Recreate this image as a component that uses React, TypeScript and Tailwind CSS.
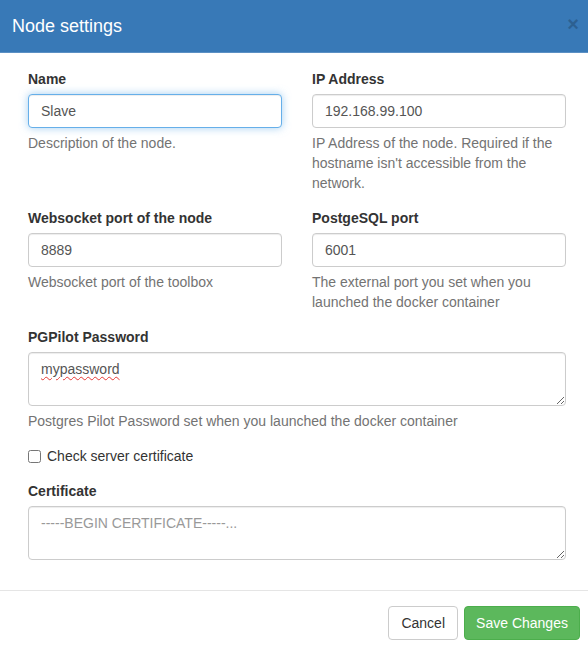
import React from "react";

const Field = ({
  label,
  value,
  help,
  focused,
}: {
  label: string;
  value: string;
  help: string;
  focused?: boolean;
}) => (
  <div className="flex flex-col">
    <label className="text-[14px] leading-[20px] font-bold text-[#333] mb-[5px]">{label}</label>
    <input
      defaultValue={value}
      className={`h-[34px] w-full rounded-[4px] border bg-white px-[12px] text-[14px] text-[#555] outline-none ${
        focused
          ? "border-[#66afe9] shadow-[inset_0_1px_1px_rgba(0,0,0,0.075),0_0_8px_rgba(102,175,233,0.6)]"
          : "border-[#ccc] shadow-[inset_0_1px_1px_rgba(0,0,0,0.075)]"
      }`}
    />
    <p className="mt-[5px] text-[14px] leading-[20px] text-[#737373]">{help}</p>
  </div>
);

export default function App() {
  return (
    <div className="w-[588px] h-[650px] overflow-hidden bg-white font-['Liberation_Sans',Arial,sans-serif]">
      {/* Header */}
      <div className="h-[53px] bg-[#3879b7] border-b border-[#5b90c4] flex items-center justify-between pl-[12px] pr-[9px]">
        <h4 className="text-[18px] leading-[26px] text-white">Node settings</h4>
        <span className="text-[20px] font-bold leading-none text-black opacity-20 -mt-[4px]">×</span>
      </div>

      {/* Body */}
      <div className="pl-[28px] pr-[22px] pt-[16px] pb-[15px]">
        <div className="grid grid-cols-2 gap-x-[30px] gap-y-[15px]">
          <Field label="Name" value="Slave" help="Description of the node." focused />
          <Field
            label="IP Address"
            value="192.168.99.100"
            help="IP Address of the node. Required if the hostname isn't accessible from the network."
          />
          <Field label="Websocket port of the node" value="8889" help="Websocket port of the toolbox" />
          <Field
            label="PostgeSQL port"
            value="6001"
            help="The external port you set when you launched the docker container"
          />
        </div>

        <div className="mt-[15px] flex flex-col">
          <label className="text-[14px] leading-[20px] font-bold text-[#333] mb-[5px]">PGPilot Password</label>
          <div className="h-[54px] resize-y overflow-auto rounded-[4px] border border-[#ccc] px-[12px] py-[6px] text-[14px] leading-[20px] text-[#555] shadow-[inset_0_1px_1px_rgba(0,0,0,0.075)]">
            <span className="underline decoration-wavy decoration-[#e53935] decoration-1 underline-offset-[2px]">
              mypassword
            </span>
          </div>
          <p className="mt-[5px] text-[14px] leading-[20px] text-[#737373]">
            Postgres Pilot Password set when you launched the docker container
          </p>
        </div>

        <label className="mt-[15px] flex items-center gap-[6px] text-[14px] leading-[20px] text-[#333]">
          <input type="checkbox" className="h-[13px] w-[13px] m-0" />
          Check server certificate
        </label>

        <div className="mt-[15px] flex flex-col">
          <label className="text-[14px] leading-[20px] font-bold text-[#333] mb-[5px]">Certificate</label>
          <textarea
            rows={2}
            placeholder="-----BEGIN CERTIFICATE-----..."
            className="h-[54px] rounded-[4px] border border-[#ccc] px-[12px] py-[6px] text-[14px] leading-[20px] text-[#555] placeholder:text-[#999] outline-none shadow-[inset_0_1px_1px_rgba(0,0,0,0.075)] resize-y"
          />
        </div>
      </div>

      {/* Footer */}
      <div className="mt-[15px] border-t border-[#e5e5e5] pt-[15px] pr-[8px] flex justify-end gap-[6px]">
        <button className="h-[34px] rounded-[4px] border border-[#ccc] bg-white px-[12px] text-[14px] text-[#333]">
          Cancel
        </button>
        <button className="h-[34px] w-[116px] rounded-[4px] border border-[#4cae4c] bg-[#5cb85c] text-[14px] text-white">
          Save Changes
        </button>
      </div>
    </div>
  );
}
